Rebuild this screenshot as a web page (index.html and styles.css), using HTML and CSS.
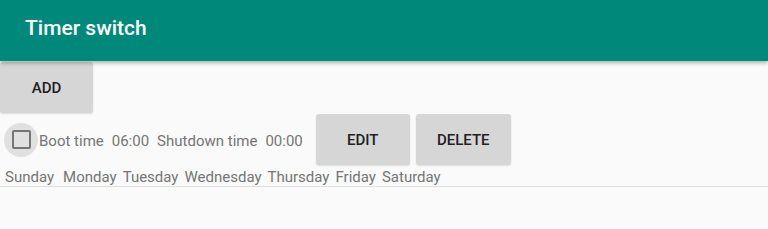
FILE: index.html
```html
<!DOCTYPE html>
<html>
<head>
  <title>Timer switch</title>
  <link rel="stylesheet" href="styles.css">
</head>
<body>
  <div class="toolbar">
    <h1>Timer switch</h1>
  </div>

  <div class="content">
    <div class="add-row">
      <button class="btn btn-add">ADD</button>
    </div>

    <div class="timer-item">
      <div class="timer-row">
        <div class="check-wrap">
          <span class="check-box"></span>
        </div>
        <div class="timer-text">
          <span>Boot time</span>
          <span>06:00</span>
          <span>Shutdown time</span>
          <span>00:00</span>
        </div>
        <div class="timer-actions">
          <button class="btn btn-edit">EDIT</button>
          <button class="btn btn-delete">DELETE</button>
        </div>
      </div>
      <div class="days">
        <span class="day-first">Sunday</span>
        <span>Monday</span>
        <span>Tuesday</span>
        <span>Wednesday</span>
        <span>Thursday</span>
        <span>Friday</span>
        <span>Saturday</span>
      </div>
    </div>
  </div>
</body>
</html>
```

FILE: styles.css
```css
* {
  margin: 0;
  padding: 0;
  box-sizing: border-box;
}

body {
  font-family: Roboto, "Noto Sans", sans-serif;
  background: #fafafa;
  color: #757575;
  width: 768px;
  height: 229px;
  overflow: hidden;
}

.toolbar {
  height: 61px;
  background: #00897b;
  display: flex;
  align-items: center;
  padding-left: 25px;
  box-shadow: 0 2px 4px rgba(0, 0, 0, 0.3);
  position: relative;
  z-index: 1;
}

.toolbar h1 {
  color: #ffffff;
  font-size: 21px;
  font-weight: 500;
  padding-bottom: 5px;
}

.content {
  padding-top: 1px;
}

.btn {
  font-family: Roboto, "Noto Sans", sans-serif;
  font-size: 15px;
  font-weight: 500;
  color: #212121;
  background: #d6d6d6;
  border: none;
  border-radius: 3px;
  height: 51px;
  box-shadow: 0 1px 2px rgba(0, 0, 0, 0.12);
}

.btn-add {
  width: 93px;
}

.timer-item {
  border-bottom: 1px solid #dedede;
}

.timer-row {
  display: flex;
  align-items: center;
  height: 51px;
  margin-top: 1px;
}

.check-wrap {
  width: 34px;
  height: 34px;
  border-radius: 50%;
  background: #e0e0e0;
  margin-left: 4px;
  display: flex;
  align-items: center;
  justify-content: center;
}

.check-box {
  width: 19px;
  height: 19px;
  border: 2px solid #757575;
  border-radius: 2px;
}

.timer-text {
  font-size: 15px;
  margin-left: 1px;
  display: flex;
  gap: 8px;
  padding-top: 2px;
}

.timer-actions {
  display: flex;
  gap: 6px;
  margin-left: 13px;
}

.btn-edit {
  width: 94px;
}

.btn-delete {
  width: 95px;
}

.days {
  font-size: 15px;
  line-height: 18px;
  padding: 3px 0 0 5px;
  height: 21px;
  display: flex;
  gap: 6px;
}

.day-first {
  margin-right: 3px;
}
```
